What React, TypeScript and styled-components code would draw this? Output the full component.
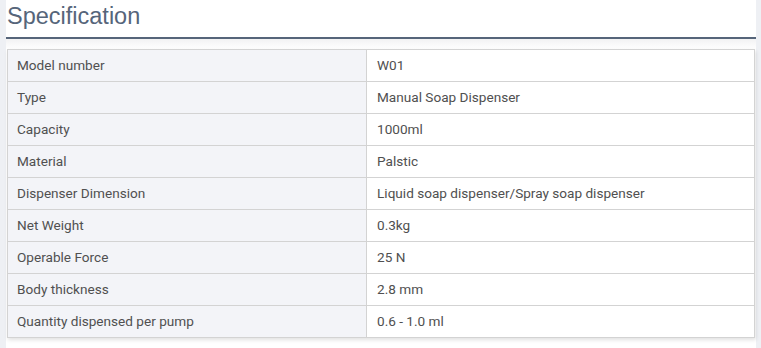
import styled, { createGlobalStyle } from "styled-components";

const Global = createGlobalStyle`
  html, body {
    margin: 0;
    padding: 0;
    background: #eef0f4;
  }
`;

const Page = styled.div`
  margin-left: 6px;
  width: 750px;
  height: 348px;
  background: #fff;
  font-family: Roboto, "Liberation Sans", sans-serif;
`;

const Heading = styled.div`
  border-bottom: 2px solid #56657a;
  box-sizing: border-box;
  height: 39px;
`;

const Title = styled.h2`
  margin: 0;
  padding: 2px 0 0 1px;
  font-family: "Liberation Sans", Arial, sans-serif;
  font-weight: 400;
  font-size: 23.5px;
  line-height: 28px;
  color: #56657a;
`;

const Fade = styled.div`
  height: 10px;
  background: linear-gradient(#f2f2f3, #ffffff);
`;

const Table = styled.table`
  margin-left: 1px;
  width: 748px;
  border-collapse: collapse;
  box-shadow: 1px 2px 4px rgba(0, 0, 0, 0.12);
  font-size: 13.6px;
  color: #505050;
`;

const Cell = styled.td<{ $label?: boolean }>`
  border: 1px solid #d3d3d3;
  height: 32px;
  padding: 0 0 2px ${(p) => (p.$label ? "9px" : "10px")};
  box-sizing: border-box;
  background: ${(p) => (p.$label ? "#f3f4f8" : "#fff")};
  width: ${(p) => (p.$label ? "359px" : "auto")};
  vertical-align: middle;
`;

const rows = [
  ["Model number", "W01"],
  ["Type", "Manual Soap Dispenser"],
  ["Capacity", "1000ml"],
  ["Material", "Palstic"],
  ["Dispenser Dimension", "Liquid soap dispenser/Spray soap dispenser"],
  ["Net Weight", "0.3kg"],
  ["Operable Force", "25 N"],
  ["Body thickness", "2.8 mm"],
  ["Quantity dispensed per pump", "0.6 - 1.0 ml"],
];

export default function App() {
  return (
    <Page>
      <Global />
      <Heading>
        <Title>Specification</Title>
      </Heading>
      <Fade />
      <Table>
        <tbody>
          {rows.map(([k, v]) => (
            <tr key={k}>
              <Cell $label>{k}</Cell>
              <Cell>{v}</Cell>
            </tr>
          ))}
        </tbody>
      </Table>
    </Page>
  );
}
